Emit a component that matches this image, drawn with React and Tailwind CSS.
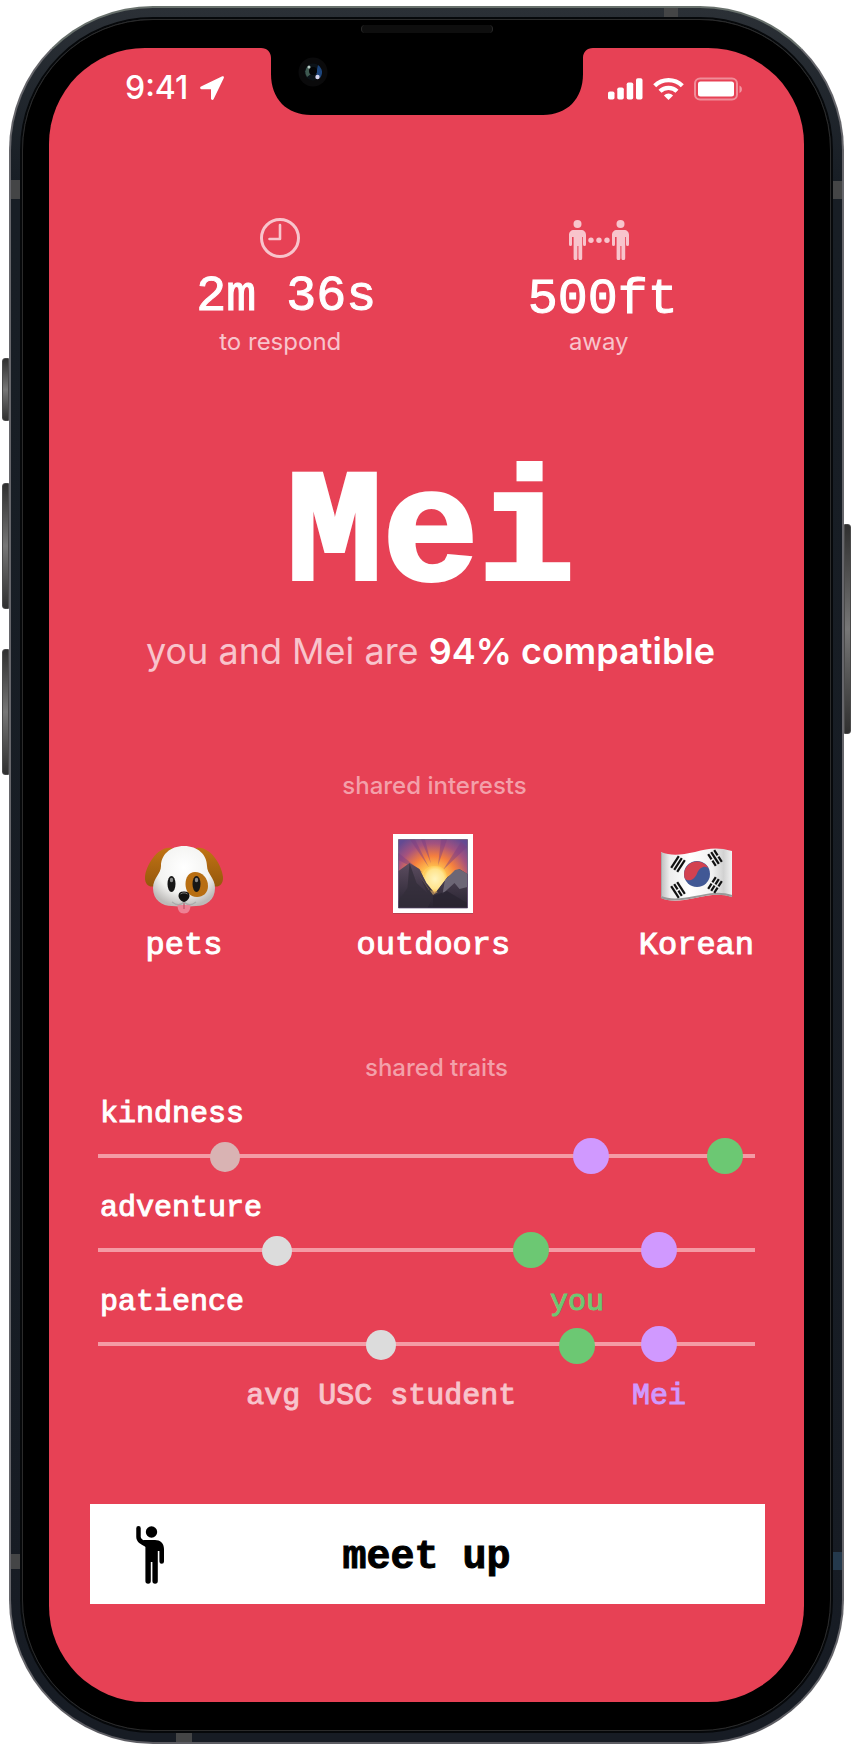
import React from "react";

const MONO = "font-['Liberation_Mono',monospace]";

const interests = [
  { name: "pets", Icon: DogIcon },
  { name: "outdoors", Icon: SunriseIcon },
  { name: "Korean", Icon: FlagIcon },
];

const traits = [
  { name: "kindness", avg: 19.4, you: 95.4, mei: 75, avgColor: "bg-[#d9b3b3]" },
  { name: "adventure", avg: 27.3, you: 65.9, mei: 85.4, avgColor: "bg-[#dcdcdc]" },
  { name: "patience", avg: 43.1, you: 72.9, mei: 85.4, avgColor: "bg-[#dcdcdc]", showYou: true },
];

function LocationIcon() {
  return (
    <svg className="h-6 w-6" viewBox="0 0 24 24" fill="#fff" aria-hidden="true">
      <path d="M22.3.3 1 10.5c-1.4.7-1 2.7.5 2.7h9.2c.2 0 .3.1.3.3v9c0 1.600 2 2 2.700.6L23.800 1.900C24.300.7 23.400-.2 22.300.3Z" />
    </svg>
  );
}

function SignalIcon() {
  return (
    <svg className="h-[22px] w-[35px]" viewBox="0 0 35 22" fill="#fff" aria-hidden="true">
      <rect x="0" y="13.500" width="6.500" height="8" rx="1.800" />
      <rect x="9.300" y="9.500" width="6.500" height="12" rx="1.800" />
      <rect x="18.700" y="4.500" width="6.500" height="17" rx="1.800" />
      <rect x="28" y="0.300" width="6.500" height="21.200" rx="1.800" />
    </svg>
  );
}

function WifiIcon() {
  return (
    <svg className="h-[22px] w-[31px]" viewBox="0 0 31 22" aria-hidden="true">
      <g fill="none" stroke="#fff" strokeWidth="4.300">
        <path d="M1.700 7.800a19.800 19.800 0 0 1 27.600 0" />
        <path d="M7 13.300a12.200 12.200 0 0 1 17 0" />
      </g>
      <path d="M15.500 22 10.900 17.400a6.700 6.700 0 0 1 9.200 0Z" fill="#fff" />
    </svg>
  );
}

function BatteryIcon() {
  return (
    <svg className="h-6 w-[49px]" viewBox="0 0 49 24" aria-hidden="true">
      <rect x="1" y="1.500" width="42" height="21" rx="5" fill="none" stroke="#fff" strokeOpacity=".4" strokeWidth="2" />
      <rect x="4" y="4.500" width="36" height="15" rx="2.500" fill="#fff" />
      <path d="M45.500 8.500v7.500c3.200-1.300 3.200-6.200 0-7.500Z" fill="#fff" fillOpacity=".45" />
    </svg>
  );
}

function ClockIcon() {
  return (
    <svg className="h-10 w-10" viewBox="0 0 40 40" fill="none" stroke="#f8c4cc" aria-hidden="true">
      <circle cx="20" cy="20" r="18.500" strokeWidth="3" />
      <path d="M20 7v14H9.500" strokeWidth="2.600" strokeLinecap="round" strokeLinejoin="round" />
    </svg>
  );
}

function Person({ x }) {
  return (
    <g transform={`translate(${x} 0)`}>
      <circle cx="8.500" cy="4" r="4" />
      <path d="M5 10h7c3 0 5 2 5 5v9.500a1.500 1.500 0 0 1-3 0V17h-.8v21.300a1.900 1.900 0 0 1-3.800 0V26h-1v12.300a1.900 1.900 0 0 1-3.800 0V17H3v7.500a1.500 1.500 0 0 1-3 0V15c0-3 2-5 5-5Z" />
    </g>
  );
}

function DistanceIcon() {
  return (
    <svg className="h-10 w-[60px]" viewBox="0 0 60 40" fill="#f8c4cc" aria-hidden="true">
      <Person x={0} />
      <Person x={43} />
      <circle cx="22" cy="20.300" r="2.700" />
      <circle cx="30" cy="20.300" r="2.700" />
      <circle cx="38" cy="20.300" r="2.700" />
    </svg>
  );
}

function DogIcon() {
  return (
    <svg className="h-20 w-20" viewBox="0 0 80 80" aria-hidden="true">
      <defs>
        <radialGradient id="dogHead" cx=".5" cy=".35" r=".65">
          <stop offset="0" stopColor="#fff" />
          <stop offset=".65" stopColor="#f3f3f1" />
          <stop offset="1" stopColor="#bcbab8" />
        </radialGradient>
        <linearGradient id="dogEar" x1="0" y1="0" x2="0" y2="1">
          <stop offset="0" stopColor="#c07414" />
          <stop offset="1" stopColor="#96570c" />
        </linearGradient>
      </defs>
      <path d="M28 14C15 11 2 30 1 43c-.5 8 5 11 10 9 6-3 7-13 10-20Z" fill="url(#dogEar)" />
      <path d="M52 14c13-3 26 16 27 29 .5 8-5 11-10 9-6-3-7-13-10-20Z" fill="url(#dogEar)" />
      <path d="M40 12c-14 0-23 9-23 20 0 8-8 12-8 22 0 12 9 18 19 18 5 0 8 1 12 1s7-1 12-1c10 0 19-6 19-18 0-10-8-14-8-22 0-11-9-20-23-20Z" fill="url(#dogHead)" />
      <path d="M51 38c-6 0-9.500 5-9.500 12 0 7 4 13 11.500 13 6 0 11-4 11-11 0-8-6-14-13-14Z" fill="#b86e12" />
      <ellipse cx="27.500" cy="50" rx="4" ry="8" fill="#161616" />
      <ellipse cx="52.500" cy="50" rx="4" ry="8" fill="#161616" />
      <ellipse cx="27.500" cy="46" rx="1.700" ry="2.200" fill="#888" />
      <ellipse cx="52.500" cy="46" rx="1.700" ry="2.200" fill="#888" />
      <path d="M33.500 71h13c0 5-2 8.500-6.500 8.500S33.500 76 33.500 71Z" fill="#ee8194" />
      <path d="M40 67v8" stroke="#bd5568" strokeWidth="1.200" />
      <path d="M28 68c5 4 9 3 12 0 3 3 7 4 12 0" fill="none" stroke="#aaa" strokeWidth="1.200" />
      <path d="M34.500 62c0-4 3-4.500 5.500-4.500s5.500.5 5.500 4.500c0 3-4 6-5.500 6s-5.500-3-5.500-6Z" fill="#111" />
      <path d="M36.500 60c2-1.500 5-1.500 7 0" stroke="#777" strokeWidth="1" fill="none" />
    </svg>
  );
}

function SunriseIcon() {
  return (
    <svg className="h-20 w-20" viewBox="0 0 80 80" aria-hidden="true">
      <defs>
        <radialGradient id="sky" cx=".5" cy=".6" r=".72">
          <stop offset="0" stopColor="#fff3a5" />
          <stop offset=".28" stopColor="#ffc04e" />
          <stop offset=".5" stopColor="#f57f3e" />
          <stop offset=".75" stopColor="#a5527e" />
          <stop offset="1" stopColor="#634a92" />
        </radialGradient>
        <radialGradient id="sun">
          <stop offset="0" stopColor="#fff4bd" />
          <stop offset=".75" stopColor="#ffe48d" />
          <stop offset="1" stopColor="#ffc957" />
        </radialGradient>
        <linearGradient id="rock" x1="0" y1="0" x2="0" y2="1">
          <stop offset="0" stopColor="#5b4c5f" />
          <stop offset="1" stopColor="#282431" />
        </linearGradient>
      </defs>
      <path d="M0 0h80v80H0Z" fill="#fff" />
      <path d="M0 79h80v1H0Z" fill="#b94150" />
      <path d="M5.500 5.500h69v68.500h-69Z" fill="url(#sky)" />
      <g fill="#793d83" opacity=".45">
        <path d="m17 5.500 5 0 14 28Z" />
        <path d="m28 5.500 4 0 6 24Z" />
        <path d="m48 5.500 6 0-9 26Z" />
        <path d="m68 8 6 5-24 23Z" />
        <path d="m5.500 19 0 7 25 13Z" />
      </g>
      <circle cx="41" cy="45" r="13" fill="url(#sun)" />
      <path d="m5.500 37 11-8 10 6 7 14 8 10 13-16 12-8 8 5v34h-69Z" fill="url(#rock)" />
      <path d="m52 46 10-10 4-1 8.500 5v13l-8 2-5-6-12 11Z" fill="#6c6675" />
      <path d="m16.500 29 7 20 11 10-6-13 13 14-7 14h-29v-7l9-13Z" fill="#332d3a" opacity=".75" />
      <path d="m26 41 14 20 5-3-9-2Z" fill="#d6a765" opacity=".65" />
      <path d="m40 62 14-5 20 12v5h-34Z" fill="#292431" opacity=".8" />
      <path d="M30 42 43 58 54 43c-1-8-6-11-12-11s-11 4-12 10Z" fill="url(#sun)" />
      <path d="M5.500 5.500h69v68.500h-69Z" fill="none" stroke="#57466d" strokeWidth=".7" />
    </svg>
  );
}

function Trigram({ x, y, angle, broken }) {
  return (
    <g transform={`translate(${x} ${y}) rotate(${angle})`} stroke="#111" strokeWidth="2.200">
      {[-3.600, 0, 3.600].map((row, i) => (
        <path key={row} d={broken[i] ? `M-7 ${row}h6.200M.8 ${row}h6.200` : `M-7 ${row}h14`} />
      ))}
    </g>
  );
}

function FlagIcon() {
  return (
    <svg className="h-20 w-20" viewBox="0 0 80 80" aria-hidden="true">
      <defs>
        <linearGradient id="cloth" x1="0" y1="0" x2="1" y2="0">
          <stop offset="0" stopColor="#bdbdbd" />
          <stop offset=".12" stopColor="#ededed" />
          <stop offset=".4" stopColor="#fff" />
          <stop offset=".72" stopColor="#f2f2f2" />
          <stop offset=".88" stopColor="#d2d2d2" />
          <stop offset="1" stopColor="#f1f1f1" />
        </linearGradient>
      </defs>
      <path d="M5 18c10 4 20 3 34 0 14-4 23-5 37-1v46c-12-4-23-2-37 1-14 3-25 4-34 0Z" fill="url(#cloth)" />
      <path d="M5 63c9 4 20 3 34 0 14-3 25-5 37-1" fill="none" stroke="#999" strokeWidth="2" />
      <path d="M5.500 19v44" stroke="#aaa" strokeWidth="1" />
      <circle cx="41" cy="40" r="13" fill="#415895" />
      <path d="M28.600 44a13 13 0 0 1 24.300-9c-2.500-3.800-8.900-3-11.900 4.500s-10 8.500-12.400 4.500Z" fill="#d34150" />
      <Trigram x={22} y={30} angle={-57} broken={[false, false, false]} />
      <Trigram x={59} y={24} angle={57} broken={[true, false, true]} />
      <Trigram x={22} y={56} angle={57} broken={[false, true, false]} />
      <Trigram x={59} y={51} angle={-57} broken={[true, true, true]} />
    </svg>
  );
}

function WavingIcon() {
  return (
    <svg className="h-[58px] w-7" viewBox="0 0 28 58" aria-hidden="true">
      <circle cx="15.500" cy="6" r="5.700" />
      <path d="M2.500 2.300V11c0 4 4.500 6 8.500 8" fill="none" stroke="#000" strokeWidth="4.500" strokeLinecap="round" />
      <path d="M8 14h11c5 0 9 3 9 9v12.500a2.300 2.300 0 0 1-4.600 0V25h-1.600v30a2.700 2.700 0 0 1-5.400 0V36h-1.600v19a2.700 2.700 0 0 1-5.400 0V20L4 16Z" />
    </svg>
  );
}

function Notch() {
  return (
    <svg className="absolute left-1/2 top-0 h-[67px] w-[332px] -translate-x-1/2" viewBox="0 0 332 67" aria-hidden="true">
      <path d="M0 0h332c-6 0-10 4-10 10v16c0 25-16 41-40 41H50C26 67 10 51 10 26V10C10 4 6 0 0 0Z" />
      <circle cx="52" cy="24" r="14.500" fill="#0a0a0b" />
      <circle cx="52" cy="24" r="8.500" fill="#0c1318" />
      <path d="M47 18a8 8 0 0 0-1 11l4-3v-6Z" fill="#3f5a51" />
      <path d="M57 17c5 4 5 9 2 13l-4-4Z" fill="#1d457c" />
      <circle cx="52" cy="23" r="4" fill="#030506" />
      <circle cx="56.500" cy="29" r="2.200" fill="#d5d5ee" />
      <circle cx="48" cy="19" r="1.500" fill="#b7cbc5" />
    </svg>
  );
}

function Dot({ at, className }) {
  return (
    <span
      className={`absolute -translate-x-1/2 -translate-y-1/2 rounded-full ${className}`}
      style={{ left: `${at}%` }}
    />
  );
}

function Trait({ trait }) {
  return (
    <li>
      <div className="relative flex h-10 items-center pl-0.5">
        <span>{trait.name}</span>
        {trait.showYou && (
          <span className="absolute -translate-x-1/2 text-[#6cc873]" style={{ left: `${trait.you}%` }}>
            you
          </span>
        )}
      </div>
      <div className="relative mt-1 flex h-9 items-center">
        <div className="h-1 w-full bg-[#f49ba5]" />
        <Dot at={trait.avg} className={`top-[19px] h-[30px] w-[30px] ${trait.avgColor}`} />
        <Dot at={trait.you} className={`h-9 w-9 bg-[#6cc873] ${trait.showYou ? "top-5" : "top-[18px]"}`} />
        <Dot at={trait.mei} className="top-[18px] h-9 w-9 bg-[#d099ff]" />
      </div>
    </li>
  );
}

function Screen() {
  return (
    <main className="relative flex flex-col overflow-hidden rounded-[96px] bg-[#e74155] pb-[98px] text-white">
      <Notch />
      <header className="flex h-[80px] items-center justify-between pl-[76px] pr-[61px]">
        <div className="flex items-center gap-3">
          <span className="text-[32px] leading-10 font-medium">9:41</span>
          <LocationIcon />
        </div>
        <div className="flex items-center gap-[10px] pt-[2px]">
          <SignalIcon />
          <WifiIcon />
          <BatteryIcon />
        </div>
      </header>

      <section className="mt-[90px] grid grid-cols-2 pl-[72px] pr-[46px]">
        <div className="flex flex-col items-center">
          <ClockIcon />
          <p className={`${MONO} mt-[17px] pl-3 text-[50px] leading-[44px] [-webkit-text-stroke:1px_white]`}>2m 36s</p>
          <p className="mt-[7px] text-2xl leading-8 text-[#f8c4cc]">to respond</p>
        </div>
        <div className="flex flex-col items-center pt-0.5">
          <DistanceIcon />
          <p className={`${MONO} mt-[18px] pl-2 text-[50px] leading-[44px] [-webkit-text-stroke:1px_white]`}>500ft</p>
          <p className="mt-1 text-2xl leading-8 text-[#f8c4cc]">away</p>
        </div>
      </section>

      <section className="mt-[99px] pl-2 text-center">
        <h1 className={`${MONO} text-[160px] font-bold leading-[160px] [-webkit-text-stroke:4px_white]`}>Mei</h1>
        <p className="mt-[10px] text-4xl leading-[48px] text-[#f8c4cc]">
          you and Mei are <strong className="font-semibold text-white">94% compatible</strong>
        </p>
      </section>

      <section className="mt-[95px]">
        <h2 className="pl-4 text-center text-2xl leading-8 font-medium text-[#f3a0aa]">shared interests</h2>
        <ul className="mt-8 flex justify-between pl-[91px] pr-[50px]">
          {interests.map(({ name, Icon }) => (
            <li key={name} className="flex min-w-[88px] flex-col items-center gap-3">
              <Icon />
              <span className={`${MONO} text-[32px] leading-10 [-webkit-text-stroke:1px_white]`}>{name}</span>
            </li>
          ))}
        </ul>
      </section>

      <section className="mt-[86px] px-[49px]">
        <h2 className="pl-5 text-center text-2xl leading-8 font-medium text-[#f3a0aa]">shared traits</h2>
        <div className={`${MONO} mt-[10px] text-[30px] leading-10 [-webkit-text-stroke:1px_currentColor]`}>
          <ul className="flex flex-col gap-[14px]">
            {traits.map((trait) => (
              <Trait key={trait.name} trait={trait} />
            ))}
          </ul>
          <div className="relative mt-[14px] h-10">
            <span className="absolute -translate-x-1/2 whitespace-nowrap text-[#f8c4cc]" style={{ left: "43.1%" }}>
              avg USC student
            </span>
            <span className="absolute -translate-x-1/2 text-[#d099ff]" style={{ left: "85.4%" }}>
              Mei
            </span>
          </div>
        </div>
      </section>

      <button
        type="button"
        className="mt-[88px] ml-[41px] mr-[39px] grid h-[100px] grid-cols-[1fr_auto_1fr] items-center bg-white pt-0.5 pl-[46px] pr-[48px] text-black"
      >
        <WavingIcon />
        <span className={`${MONO} pt-1.5 text-[40px] font-bold leading-[48px] [-webkit-text-stroke:1px_black]`}>meet up</span>
      </button>
    </main>
  );
}

const SIDE_KEY = "absolute w-[7px] border border-[#4a4a4a] bg-linear-to-b from-[#303030] via-[#777777] to-[#303030]";
const ANTENNA = "absolute bg-[#444546]";

export default function App() {
  return (
    <div className="bg-white pl-[9px] pr-2 pb-[7px] pt-[6px] font-['Inter',sans-serif]">
      <div className="relative">
        <span className={`${SIDE_KEY} -left-[7px] top-[352px] h-[63px] rounded-l-[3px]`} />
        <span className={`${SIDE_KEY} -left-[7px] top-[477px] h-[126px] rounded-l-[3px]`} />
        <span className={`${SIDE_KEY} -left-[7px] top-[643px] h-[126px] rounded-l-[3px]`} />
        <span className={`${SIDE_KEY} -right-[7px] top-[518px] h-[210px] rounded-r-[3px]`} />

        <div className="relative rounded-[144px] border-2 border-x-[#66666b] border-b-[#5d5d63] border-t-[#68706c] bg-linear-to-b from-[#2b3036] via-[#181e25] via-10% to-[#171c24] p-[9px]">
          <span className={`${ANTENNA} left-0 top-[172px] h-[19px] w-[9px]`} />
          <span className={`${ANTENNA} right-0 top-[173px] h-[18px] w-[9px]`} />
          <span className={`${ANTENNA} right-[164px] top-0 h-[9px] w-[14px]`} />
          <span className={`${ANTENNA} bottom-0 left-[165px] h-[9px] w-[16px]`} />
          <span className={`${ANTENNA} bottom-[173px] left-0 h-[15px] w-[9px]`} />
          <span className="absolute bottom-[172px] right-0 h-[18px] w-[9px] bg-[#24394c]" />
          <div className="rounded-[133px] border-2 border-[#06080a]">
            <div className="relative rounded-[131px] border border-[#2b2b2b] bg-black px-[26px] py-[28px]">
              <span className="absolute left-1/2 top-[5px] h-2 w-[132px] -translate-x-1/2 rounded-full border-x border-[#2b2b2b] bg-[#0e0e0e]" />
              <Screen />
            </div>
          </div>
        </div>
      </div>
    </div>
  );
}
